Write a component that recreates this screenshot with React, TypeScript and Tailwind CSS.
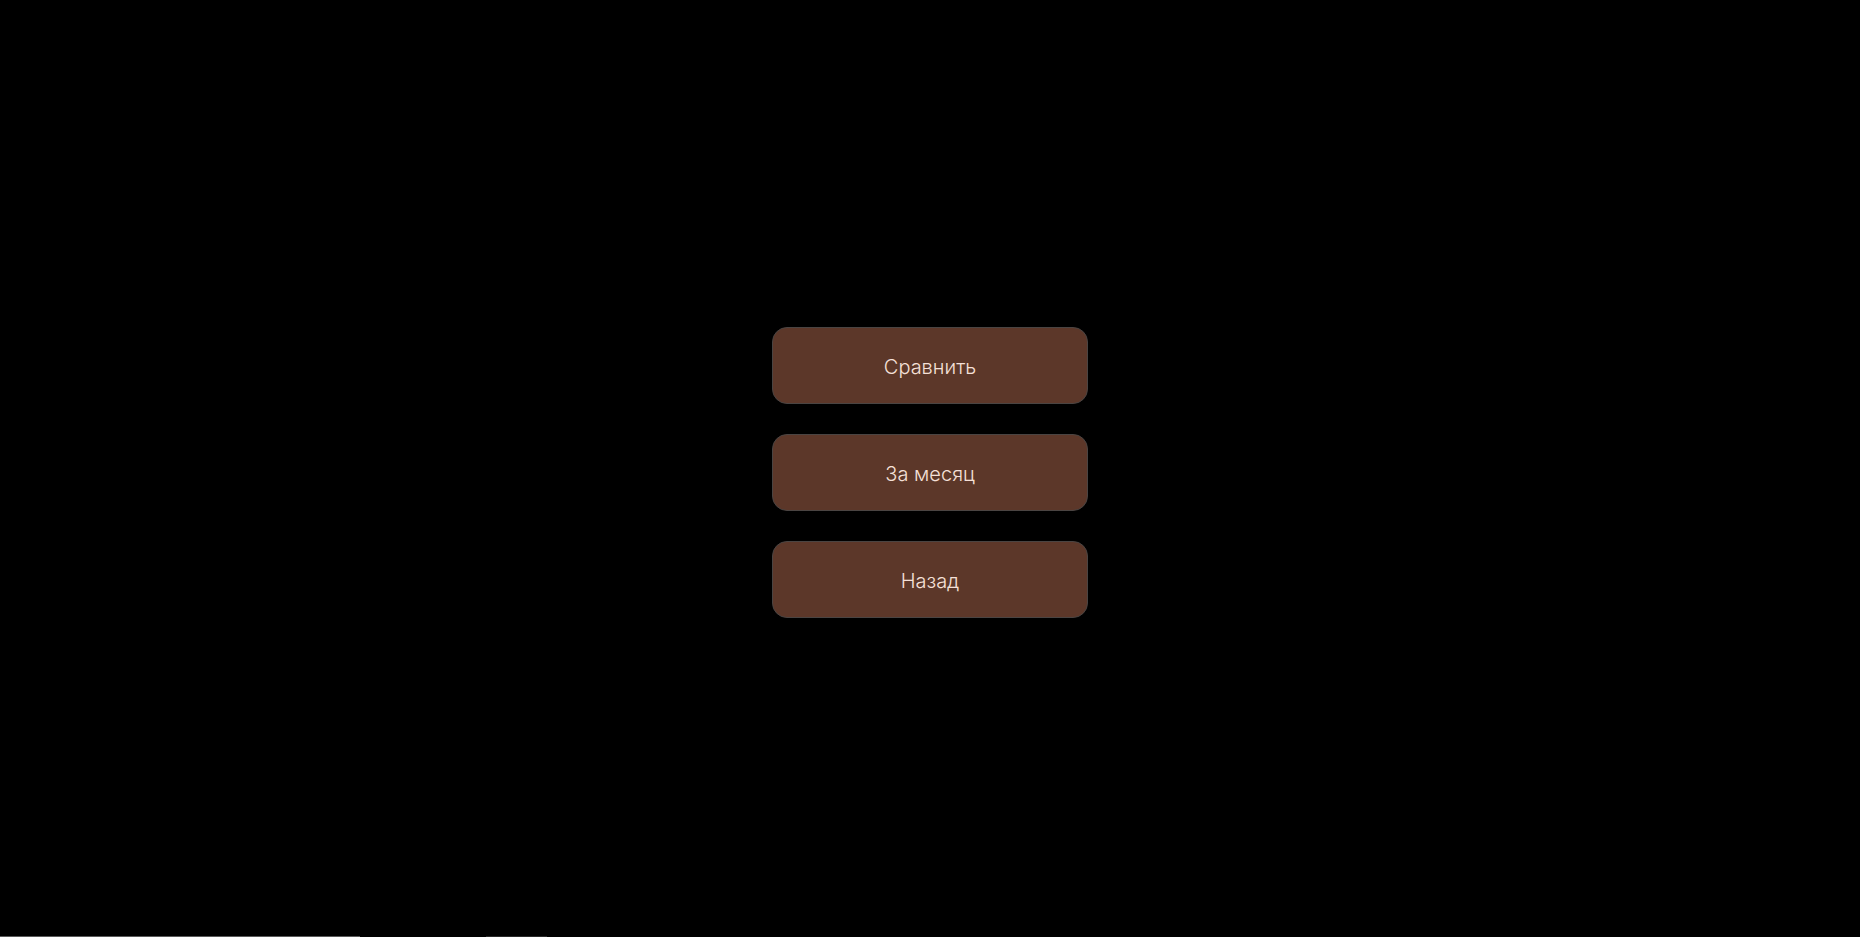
import React from 'react';

const items = ['Сравнить', 'За месяц', 'Назад'];

const App: React.FC = () => {
  return (
    <div className="h-screen w-full bg-black flex flex-col overflow-hidden" style={{ fontFamily: 'Inter, "Noto Sans", sans-serif' }}>
      <div className="flex-1 flex flex-col items-center justify-center gap-[30px] pt-[8px]">
        {items.map(label => (
          <button
            key={label}
            className="w-[316px] h-[77px] rounded-[15px] bg-[#5c3729] border border-[#4a4442] text-[#f5e0d8] text-[20px] font-light pt-[3px] flex items-center justify-center"
          >
            {label}
          </button>
        ))}
      </div>
      {/* bottom strip */}
      <div className="h-px flex shrink-0">
        <div className="w-[360px] bg-[#5a5a5a]" />
        <div className="w-[126px]" />
        <div className="w-[61px] bg-[#2a2a2a]" />
      </div>
    </div>
  );
};

export default App;
